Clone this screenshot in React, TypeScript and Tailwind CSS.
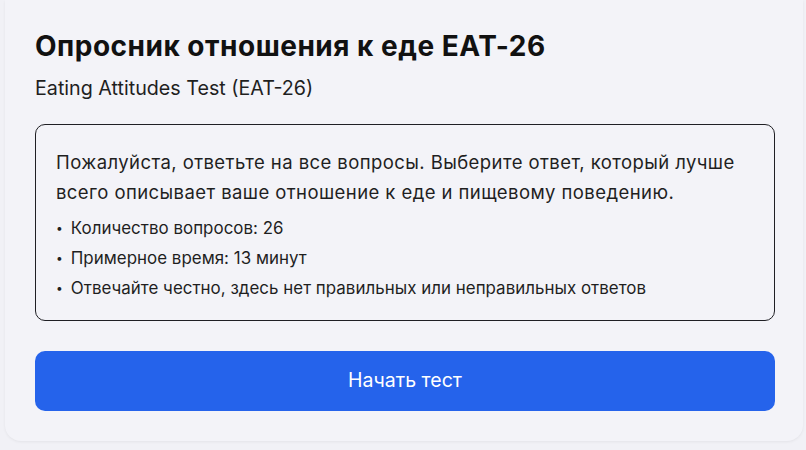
import React from 'react';

export default function App() {
  const points = [
    'Количество вопросов: 26',
    'Примерное время: 13 минут',
    'Отвечайте честно, здесь нет правильных или неправильных ответов',
  ];

  return (
    <div className="min-h-screen bg-[#f1f1f6] pl-[5px] pr-[3px] font-['Inter',sans-serif]">
      <div className="rounded-b-2xl bg-[#f3f3f8] pl-[30px] pr-[28px] pt-[26px] pb-[30px] shadow-[0_1px_3px_rgba(0,0,0,0.06)]">
        <h1 className="text-[28px] font-bold leading-[40px] text-[#111111] tracking-[0.5px]">
          Опросник отношения к еде EAT-26
        </h1>
        <p className="mt-[10px] text-[19.7px] leading-[24px] text-[#1f1f1f]">Eating Attitudes Test (EAT-26)</p>

        <div className="mt-[24px] rounded-[10px] border border-[#1f1f24] px-[20px] pt-[22px] pb-[17px]">
          <p className="text-[18.5px] leading-[30px] text-[#1f1f1f] tracking-[0.42px]">
            Пожалуйста, ответьте на все вопросы. Выберите ответ, который лучше всего описывает ваше отношение к еде и пищевому поведению.
          </p>
          <ul className="mt-[6px] flex flex-col">
            {points.map((p) => (
              <li key={p} className="flex items-center gap-[8px] text-[16.9px] leading-[30px] text-[#1f1f1f] tracking-[0.03px]">
                <span className="text-[12px]">•</span>
                <span>{p}</span>
              </li>
            ))}
          </ul>
        </div>

        <button className="mt-[30px] flex h-[60px] w-full items-center justify-center rounded-[10px] bg-[#2563eb] text-[19.5px] text-white">
          Начать тест
        </button>
      </div>
    </div>
  );
}
